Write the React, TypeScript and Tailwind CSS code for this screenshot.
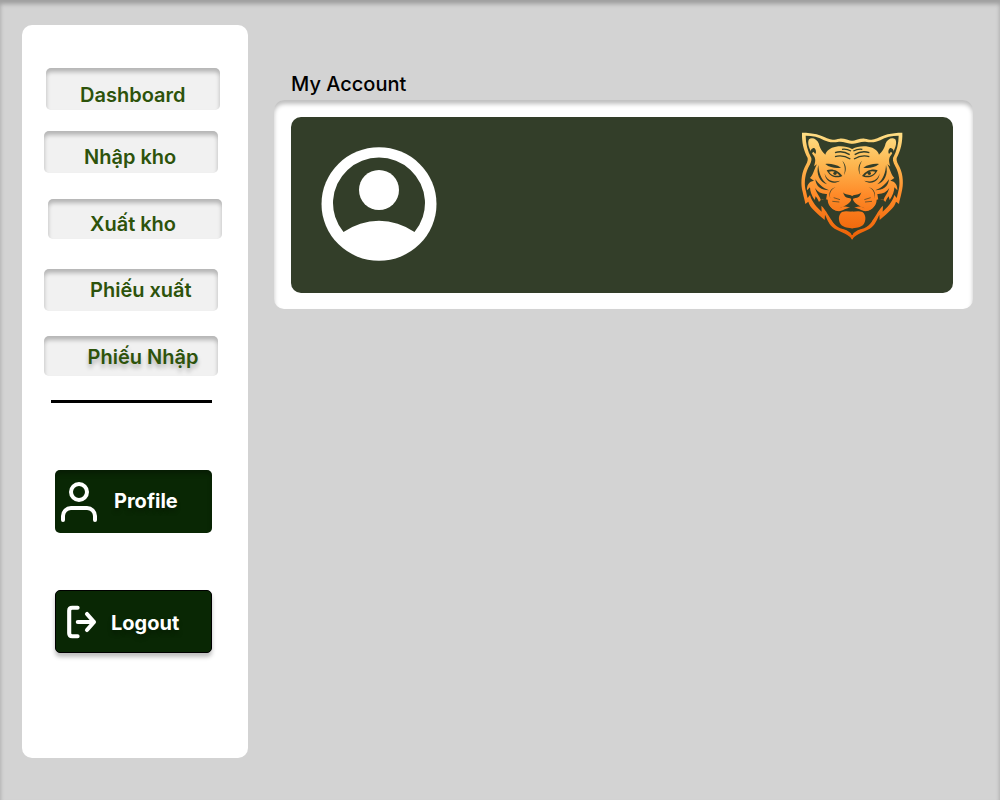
import type { ReactNode } from 'react';

const INSET = 'shadow-[inset_0_4px_4px_rgba(0,0,0,0.25)]';

function NavButton({ label, box, text }: { label: string; box: string; text: string }) {
  return (
    <button
      className={`${box} flex w-[174px] items-start rounded-[5px] bg-[#f1f1f1] text-left text-[20px] leading-6 font-semibold whitespace-nowrap text-[#2d530b] ${INSET}`}
    >
      <span className={`block ${text}`}>{label}</span>
    </button>
  );
}

function ActionButton({ label, box, text, icon }: { label: string; box: string; text: string; icon: ReactNode }) {
  return (
    <button
      className={`${box} ml-[33px] flex h-[63px] w-[157px] items-start rounded-[5px] bg-[#092704] text-left text-[20px] leading-6 font-bold text-white`}
    >
      {icon}
      <span className={`block ${text} [text-shadow:0_4px_4px_rgba(0,0,0,0.25)]`}>{label}</span>
    </button>
  );
}

function Mirrored({ children }: { children: ReactNode }) {
  return (
    <>
      {children}
      <g transform="translate(375 0) scale(-1 1)">{children}</g>
    </>
  );
}

function TigerOutline() {
  return (
    <path
      fill="url(#tiger)"
      d="M190 63C176 62 163 54 150 56C136 58 128 62 112 55C96 45 70 38 37 38C36 66 42 92 54 114C56 122 50 132 45 142C34 164 33 196 39 216C42 232 46 242 47 252L56 245C60 262 78 276 105 300L106 284C112 296 115 308 128 321C145 336 172 338 187.5 358H190Z"
    />
  );
}

function TigerBand() {
  return (
    <path
      fill="#333e29"
      d="M190 72C172 71 162 64 148 65C130 69 116 67 103 61C88 51 68 47 48 47C48 70 54 94 65 114C67 124 60 135 54 147C45 168 43 194 49 214C51 222 52 228 54 234L61 225C67 247 82 262 96 275L95 257C110 271 119 293 132 308C148 323 174 327 187.5 344H190Z"
    />
  );
}

function TigerFace() {
  return (
    <path
      fill="url(#tiger)"
      d="M70 104C58 88 52 68 58 58C66 50 82 56 87 70C91 87 98 96 107 104C110 92 121 83 139 80C156 77 174 80 187 87H190V274L170 268C160 280 139 277 127 266C119 258 114 250 114 239C104 236 96 236 88 246C85 240 83 235 78 229L75 240C66 228 61 214 61 202L52 211C51 196 58 184 73 182L61 174C72 164 73 147 82 133L73 139C78 123 79 115 70 104Z"
    />
  );
}

function TigerDetails() {
  return (
    <>
      <g fill="#333e29">
        <path d="M65 102C59 92 66 84 74 84C80 90 80 97 77 102L71 95Z" />
        <path d="M86 135C87 158 94 177 112 193C91 186 78 163 86 135Z" />
        <path d="M77 178C86 191 99 204 118 211C95 211 79 200 77 178Z" />
        <path d="M76 204C84 216 96 223 112 222L109 240C104 236 99 236 94 241C90 228 80 219 76 204Z" />
        <path d="M107 132C120 130 139 133 154 143C139 145 121 144 107 132Z" />
        <path d="M111 151C124 145 145 149 158 168L151 171C137 174 121 171 111 151Z" />
        <path d="M105 160C111 182 128 188 151 182C132 195 108 188 105 160Z" />
        <path d="M158 122C172 136 170 153 163 165C167 151 167 138 158 122Z" />
        <path d="M160 217C167 226 178 222 187 228H190V237H187L178 234C169 235 163 228 160 217Z" />
        <path d="M138 201C121 209 117 226 124 240C115 222 119 207 138 201Z" />
        <path d="M185.5 236H190V267H186C174 258 163 257 150 265C165 258 183 250 185.5 236Z" />
        <path d="M113 248C125 274 149 279 165 268L176 264H190V332C158 329 140 323 129 305Z" />
      </g>
      <g fill="none" stroke="#333e29" strokeWidth="4">
        <path d="M136 98C151 93 166 95 180 104" />
        <path d="M136 110C152 105 167 108 182 117" />
        <path d="M157 88C167 86 176 89 184 93" />
        <path strokeWidth="2" d="M132 233L151 239M128 244L149 246" />
      </g>
      <path fill="url(#tiger)" d="M118 155C129 151 141 155 150 167C135 169 125 166 118 155Z" />
      <circle cx="136" cy="160" r="5" fill="#333e29" />
    </>
  );
}

function TigerTongue() {
  return (
    <path
      fill="url(#tiger)"
      d="M190 275C178 275 168 271 157 276C146 284 145 300 153 313C162 323 177 325 190 325Z"
    />
  );
}

function TigerLogo() {
  return (
    <svg className="mt-[2.5px] ml-[352.5px] h-[130px] w-[125px] shrink-0" viewBox="1 0 375 390">
      <defs>
        <linearGradient id="tiger" gradientUnits="userSpaceOnUse" x1="0" y1="38" x2="0" y2="350">
          <stop offset="0" stopColor="#ffdf86" />
          <stop offset="0.3" stopColor="#fdb750" />
          <stop offset="0.6" stopColor="#ff8a28" />
          <stop offset="1" stopColor="#ed6207" />
        </linearGradient>
      </defs>
      <Mirrored><TigerOutline /></Mirrored>
      <Mirrored><TigerBand /></Mirrored>
      <Mirrored><TigerFace /></Mirrored>
      <Mirrored><TigerDetails /></Mirrored>
      <Mirrored><TigerTongue /></Mirrored>
    </svg>
  );
}

export default function App() {
  return (
    <div className="flex h-[800px] w-[1000px] items-start overflow-hidden bg-[#d3d3d3] font-['Inter',sans-serif] shadow-[inset_0_4px_4px_rgba(0,0,0,0.25)]">
      <aside className="mt-[25px] ml-[22px] h-[733px] w-[226px] shrink-0 rounded-[10px] bg-white">
        <nav className="flex flex-col pt-[43px]">
          <NavButton label="Dashboard" box="ml-[24px] h-[42px]" text="pt-[15px] pl-[34px]" />
          <NavButton label="Nhập kho" box="mt-[21px] ml-[22px] h-[42px]" text="pt-[14px] pl-[40px]" />
          <NavButton label="Xuất kho" box="mt-[26px] ml-[26px] h-[40px]" text="pt-[13px] pl-[42px]" />
          <NavButton label="Phiếu xuất" box="mt-[30px] ml-[22px] h-[42px]" text="pt-[9px] pl-[46px]" />
          <NavButton
            label="Phiếu Nhập"
            box="mt-[25px] ml-[22px] h-[40px]"
            text="pt-[9px] pl-[43.5px] [text-shadow:0_4px_4px_rgba(0,0,0,0.25)]"
          />
        </nav>
        <div className="mt-[24px] ml-[29px] h-[3px] w-[161px] bg-black" />
        <ActionButton
          label="Profile"
          box="mt-[67px] shadow-[inset_0_4px_4px_rgba(0,0,0,0.25)]"
          text="mt-[19px] ml-[17px]"
          icon={
            <svg className="mt-[12px] ml-[6px] h-[40px] w-[36px]" viewBox="0 0 36 40" fill="none" stroke="white" strokeWidth="4" strokeLinecap="round">
              <circle cx="18" cy="10" r="8" />
              <path d="M2 38V34A8 8 0 0 1 10 26H26A8 8 0 0 1 34 34V38" />
            </svg>
          }
        />
        <ActionButton
          label="Logout"
          box="mt-[57px] border border-black shadow-[0_4px_4px_rgba(0,0,0,0.25)]"
          text="mt-[20px] ml-[14px]"
          icon={
            <svg className="mt-[14px] ml-[11px] h-[34px] w-[30px]" viewBox="0 0 30 34" fill="none" stroke="white" strokeWidth="4.1" strokeLinecap="round" strokeLinejoin="round">
              <path d="M10.6 2.8H5.2Q2.2 2.8 2.2 5.8V28.2Q2.2 31.2 5.2 31.2H10.6" />
              <path d="M10.8 17H27M20 9L27 17L20 25" />
            </svg>
          }
        />
      </aside>
      <main className="ml-[26px] w-[699px] pt-[72px]">
        <h1 className="pl-[17px] text-[20px] leading-6 font-medium text-black">My Account</h1>
        <section className={`mt-[4px] h-[209px] rounded-[10px] bg-white pt-[17px] pl-[17px] ${INSET}`}>
          <div className="flex h-[176px] w-[662px] items-start rounded-[10px] bg-[#333e29]">
            <svg className="mt-[30px] ml-[30px] h-[114px] w-[116px] shrink-0" viewBox="0 0 116 114">
              <ellipse cx="58" cy="57" rx="57.5" ry="56.7" fill="white" />
              <path fill="#333e29" d="M22.5 85.5A46 45.5 0 1 1 93.5 85.5A62 62 0 0 0 22.5 85.5Z" transform="translate(0 -0.5)" />
              <circle cx="58" cy="43" r="20" fill="white" />
            </svg>
            <TigerLogo />
          </div>
        </section>
      </main>
    </div>
  );
}
